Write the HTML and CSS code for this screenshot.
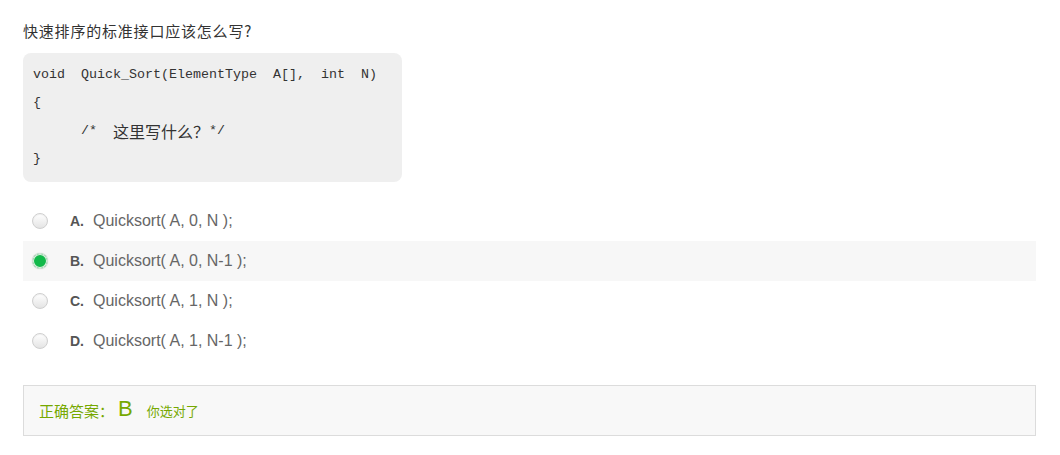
FILE: index.html
```html
<!DOCTYPE html>
<html>
<head>
<meta charset="utf-8">
<link rel="stylesheet" href="styles.css">
</head>
<body>
<div class="page">
  <div class="title">快速排序的标准接口应该怎么写?</div>
  <div class="code">
    <div class="ln">void  Quick_Sort(ElementType  A[],  int  N)</div>
    <div class="ln">{</div>
    <div class="ln">      /*  <span class="cjk">这里写什么？</span>*/</div>
    <div class="ln">}</div>
  </div>
  <div class="options">
    <div class="opt"><span class="radio"></span><span class="lab">A.</span><span class="txt">Quicksort( A, 0, N );</span></div>
    <div class="opt sel"><span class="radio on"></span><span class="lab">B.</span><span class="txt">Quicksort( A, 0, N-1 );</span></div>
    <div class="opt"><span class="radio"></span><span class="lab">C.</span><span class="txt">Quicksort( A, 1, N );</span></div>
    <div class="opt"><span class="radio"></span><span class="lab">D.</span><span class="txt">Quicksort( A, 1, N-1 );</span></div>
  </div>
  <div class="answer">
    <span class="a-lab">正确答案：</span><span class="a-val">B</span><span class="a-msg">你选对了</span>
  </div>
</div>
</body>
</html>
```
FILE: styles.css
```css
html, body {
  margin: 0;
  padding: 0;
  background: #fff;
}
.page {
  width: 1013px;
  padding: 21px 0 0 23px;
  font-family: "Liberation Sans", "Noto Sans CJK SC", sans-serif;
}
.title {
  font-size: 15px;
  letter-spacing: 0.8px;
  line-height: 20px;
  color: #333;
  font-family: "Noto Sans CJK SC", sans-serif;
  margin-bottom: 12px;
}
.code {
  width: 359px;
  background: #efefef;
  border-radius: 8px;
  padding: 8px 10px 9px;
  font-family: "Liberation Mono", monospace;
  font-size: 13.33px;
  color: #333;
}
.ln {
  height: 28px;
  line-height: 28px;
  white-space: pre;
  display: flex;
  align-items: center;
}
.code .cjk {
  font-family: "Noto Sans CJK SC", sans-serif;
  font-size: 16px;
  line-height: 20px;
}
.options {
  margin-top: 19px;
}
.opt {
  height: 40px;
  display: flex;
  align-items: center;
  padding-left: 9px;
}
.opt.sel {
  background: #f7f7f7;
}
.radio {
  width: 14px;
  height: 14px;
  border-radius: 50%;
  border: 1px solid #cfcfcf;
  background: linear-gradient(#ffffff, #e4e4e4);
  box-shadow: inset 0 1px 1px rgba(0,0,0,0.06);
  flex: none;
}
.radio.on {
  background: #12b94a;
  border: 1px solid #d4ead9;
  box-shadow: 0 0 0 1px #e8efe9 inset, 0 0 1px #bbb;
}
.lab {
  margin-left: 22px;
  font-weight: bold;
  font-size: 14px;
  color: #555;
  width: 23px;
}
.txt {
  font-size: 16px;
  color: #666;
}
.answer {
  margin-top: 24px;
  height: 49px;
  border: 1px solid #dcdcdc;
  background: #f8f8f8;
  display: flex;
  align-items: center;
  padding-left: 15px;
  color: #76a800;
  font-family: "Noto Sans CJK SC", sans-serif;
}
.a-lab {
  font-size: 15px;
}
.a-val {
  font-family: "Liberation Sans", sans-serif;
  font-size: 22px;
  margin-left: 4px;
  margin-right: 14px;
  position: relative;
  top: -2px;
}
.a-msg {
  font-size: 13px;
}
```
